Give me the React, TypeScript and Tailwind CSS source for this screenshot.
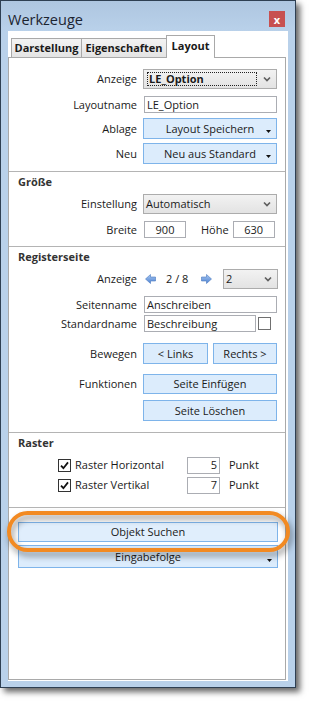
import React from 'react';

type Kids = { children?: React.ReactNode; className?: string };

const Chevron = () => (
  <svg width="8" height="6" viewBox="0 0 8 6" className="shrink-0">
    <path d="M1 1.5 L4 4.5 L7 1.5" fill="none" stroke="#5f5f5f" strokeWidth="1.7" />
  </svg>
);

const DropArrow = () => (
  <svg width="5" height="3" viewBox="0 0 5 3" className="absolute right-[5px] bottom-[5px]">
    <path d="M0 0 H5 L2.5 3 Z" fill="#111" />
  </svg>
);

const NavArrow = ({ dir }: { dir: 'left' | 'right' }) => (
  <svg width="11" height="10" viewBox="0 0 11 10" className="shrink-0">
    <defs>
      <linearGradient id={`arr-${dir}`} x1="0" y1="0" x2="0" y2="1">
        <stop offset="0" stopColor="#a9c8f2" />
        <stop offset="1" stopColor="#4d82d2" />
      </linearGradient>
    </defs>
    <path
      d={dir === 'left' ? 'M0.5 5 L5.5 0.5 V3 H10.5 V7 H5.5 V9.5 Z' : 'M10.5 5 L5.5 0.5 V3 H0.5 V7 H5.5 V9.5 Z'}
      fill={`url(#arr-${dir})`}
      stroke="#4a78c0"
      strokeWidth="0.6"
    />
  </svg>
);

const Btn = ({ children, className = '', drop = false }: Kids & { drop?: boolean }) => (
  <div className={`relative flex items-center justify-center border border-[#7eb4ea] bg-[#dcecfc] ${className}`}>
    {children}
    {drop && <DropArrow />}
  </div>
);

const Field = ({ children, className = '' }: Kids) => (
  <div className={`flex h-[17px] items-center border border-[#abadb3] bg-white px-[2px] ${className}`}>{children}</div>
);

const Combo = ({ children, className = '' }: Kids) => (
  <div
    className={`flex h-[20px] items-center border border-[#acacac] bg-gradient-to-b from-[#f2f2f2] to-[#e3e3e3] pl-[2px] pr-[5px] ${className}`}
  >
    <div className="flex-1">{children}</div>
    <Chevron />
  </div>
);

const Check = ({ checked = false }: { checked?: boolean }) => (
  <div className="flex h-[13px] w-[13px] shrink-0 items-center justify-center border border-[#333] bg-white">
    {checked && (
      <svg width="9" height="9" viewBox="0 0 9 9">
        <path d="M1 4.6 L3.4 7.2 L8 1.4" fill="none" stroke="#111" strokeWidth="1.8" />
      </svg>
    )}
  </div>
);

const Row = ({ label, children, className = '' }: Kids & { label: string }) => (
  <div className={`flex items-center ${className}`}>
    <div className="w-[128px] text-right">{label}</div>
    <div className="ml-[6px] flex items-center">{children}</div>
  </div>
);

const Sep = ({ className = '' }: { className?: string }) => <div className={`h-px bg-[#b4b4b4] ${className}`} />;

const Header = ({ children, className = '' }: Kids) => (
  <div className={`h-[16px] pl-[9px] font-bold text-[#333] ${className}`}>{children}</div>
);

export default function App() {
  return (
    <div className="min-h-screen bg-white font-['Segoe_UI','Open_Sans',sans-serif] text-[11px] leading-[16px] text-[#1a1a1a]">
      <div className="relative flex h-[688px] w-[296px] flex-col border border-[#2e3f52] bg-[#b9d1ea] shadow-[4px_4px_6px_rgba(0,0,0,0.6)]">
        {/* Titelleiste */}
        <div className="flex h-[30px] items-start justify-between bg-gradient-to-b from-[#aec6e0] to-[#b9d1ea] pl-[7px] pr-[10px]">
          <span className="mt-[8px] text-[14.5px] leading-[22px] text-[#1c2430]">Werkzeuge</span>
          <div className="mt-[10px] flex h-[16px] w-[16px] items-center justify-center bg-[#c75050] text-[11px] font-bold leading-none text-white">
            x
          </div>
        </div>

        {/* Inhalt */}
        <div className="mb-[6px] ml-[7px] mr-[7px] flex flex-1 flex-col bg-white">
          {/* Reiter */}
          <div className="flex h-[26px] items-end pl-[3px]">
            <div className="flex h-[19px] w-[71px] items-center justify-center border border-b-0 border-[#a9a9a9] bg-gradient-to-b from-[#f3f3f3] to-[#e4e4e4] font-bold">
              Darstellung
            </div>
            <div className="-ml-px flex h-[19px] w-[86px] items-center justify-center border border-b-0 border-[#a9a9a9] bg-gradient-to-b from-[#f3f3f3] to-[#e4e4e4] font-bold">
              Eigenschaften
            </div>
            <div className="relative z-10 -mb-px -ml-px flex h-[23px] w-[49px] items-center justify-center border border-b-0 border-[#a9a9a9] bg-white pb-[2px] font-bold">
              Layout
            </div>
          </div>

          {/* Reiterseite */}
          <div className="mb-[1px] mr-[2px] flex flex-1 flex-col border border-[#a9a9a9]">
            <Row label="Anzeige" className="mt-[11px]">
              <Combo className="w-[134px]">
                <span className="ml-[1px] flex h-[14px] w-[110px] items-center border border-dotted border-[#222] px-[1px] font-bold">
                  LE_Option
                </span>
              </Combo>
            </Row>
            <Row label="Layoutname" className="mt-[7px]">
              <Field className="ml-px w-[133px]">LE_Option</Field>
            </Row>
            <Row label="Ablage" className="mt-[5px]">
              <Btn drop className="h-[21px] w-[134px]">Layout Speichern</Btn>
            </Row>
            <Row label="Neu" className="mt-[4px]">
              <Btn drop className="h-[21px] w-[134px]">Neu aus Standard</Btn>
            </Row>

            <Sep className="mt-[7px]" />
            <Header className="mt-[2px]">Größe</Header>
            <Row label="Einstellung" className="mt-[4px]">
              <Combo className="w-[134px]">Automatisch</Combo>
            </Row>
            <Row label="Breite" className="mt-[7px]">
              <Field className="ml-px w-[42px] justify-center">900</Field>
              <span className="ml-[15px]">Höhe</span>
              <Field className="ml-[4px] w-[42px] justify-center">630</Field>
            </Row>

            <Sep className="mt-[8px]" />
            <Header className="mt-[2px]">Registerseite</Header>
            <Row label="Anzeige" className="mt-[4px]">
              <span className="ml-[2px]">
                <NavArrow dir="left" />
              </span>
              <span className="ml-[10px] w-[35px]">2 / 8</span>
              <NavArrow dir="right" />
              <Combo className="ml-[11px] w-[55px]">2</Combo>
            </Row>
            <Row label="Seitenname" className="mt-[7px]">
              <Field className="ml-px w-[133px]">Anschreiben</Field>
            </Row>
            <Row label="Standardname" className="mt-[2px]">
              <Field className="ml-px w-[112px]">Beschreibung</Field>
              <div className="ml-[2px]">
                <div className="flex h-[13px] w-[13px] border border-[#707070] bg-white" />
              </div>
            </Row>
            <Row label="Bewegen" className="mt-[11px]">
              <Btn className="h-[21px] w-[65px]">&lt; Links</Btn>
              <Btn className="ml-[5px] h-[21px] w-[64px]">Rechts &gt;</Btn>
            </Row>
            <Row label="Funktionen" className="mt-[10px]">
              <Btn className="h-[20px] w-[134px]">Seite Einfügen</Btn>
            </Row>
            <div className="ml-[134px] mt-[6px]">
              <Btn className="h-[21px] w-[134px]">Seite Löschen</Btn>
            </div>

            <Sep className="mt-[11px]" />
            <Header className="mt-[2px]">Raster</Header>
            <div className="ml-[49px] mt-[6px] flex h-[16px] items-center">
              <Check checked />
              <span className="w-[116px] pl-[4px]">Raster Horizontal</span>
              <Field className="w-[33px] justify-end">5</Field>
              <span className="ml-[9px]">Punkt</span>
            </div>
            <div className="ml-[49px] mt-[4px] flex h-[16px] items-center">
              <Check checked />
              <span className="w-[116px] pl-[4px]">Raster Vertikal</span>
              <Field className="w-[33px] justify-end">7</Field>
              <span className="ml-[9px]">Punkt</span>
            </div>

            <Sep className="mt-[14px]" />
            <div className="ml-[9px] mt-[14px] flex w-[260px] flex-col">
              <Btn className="h-[20px] bg-[#e0eefc]">Objekt Suchen</Btn>
              <Btn drop className="mt-[3px] h-[23px]">Eingabefolge</Btn>
            </div>
          </div>
        </div>

        {/* Markierung */}
        <div className="pointer-events-none absolute left-[6px] top-[510px] z-20 h-[41px] w-[283px] rounded-full border-[4px] border-[#f28a22] [filter:drop-shadow(2px_4px_3px_rgba(0,0,0,0.45))]" />
      </div>
    </div>
  );
}
